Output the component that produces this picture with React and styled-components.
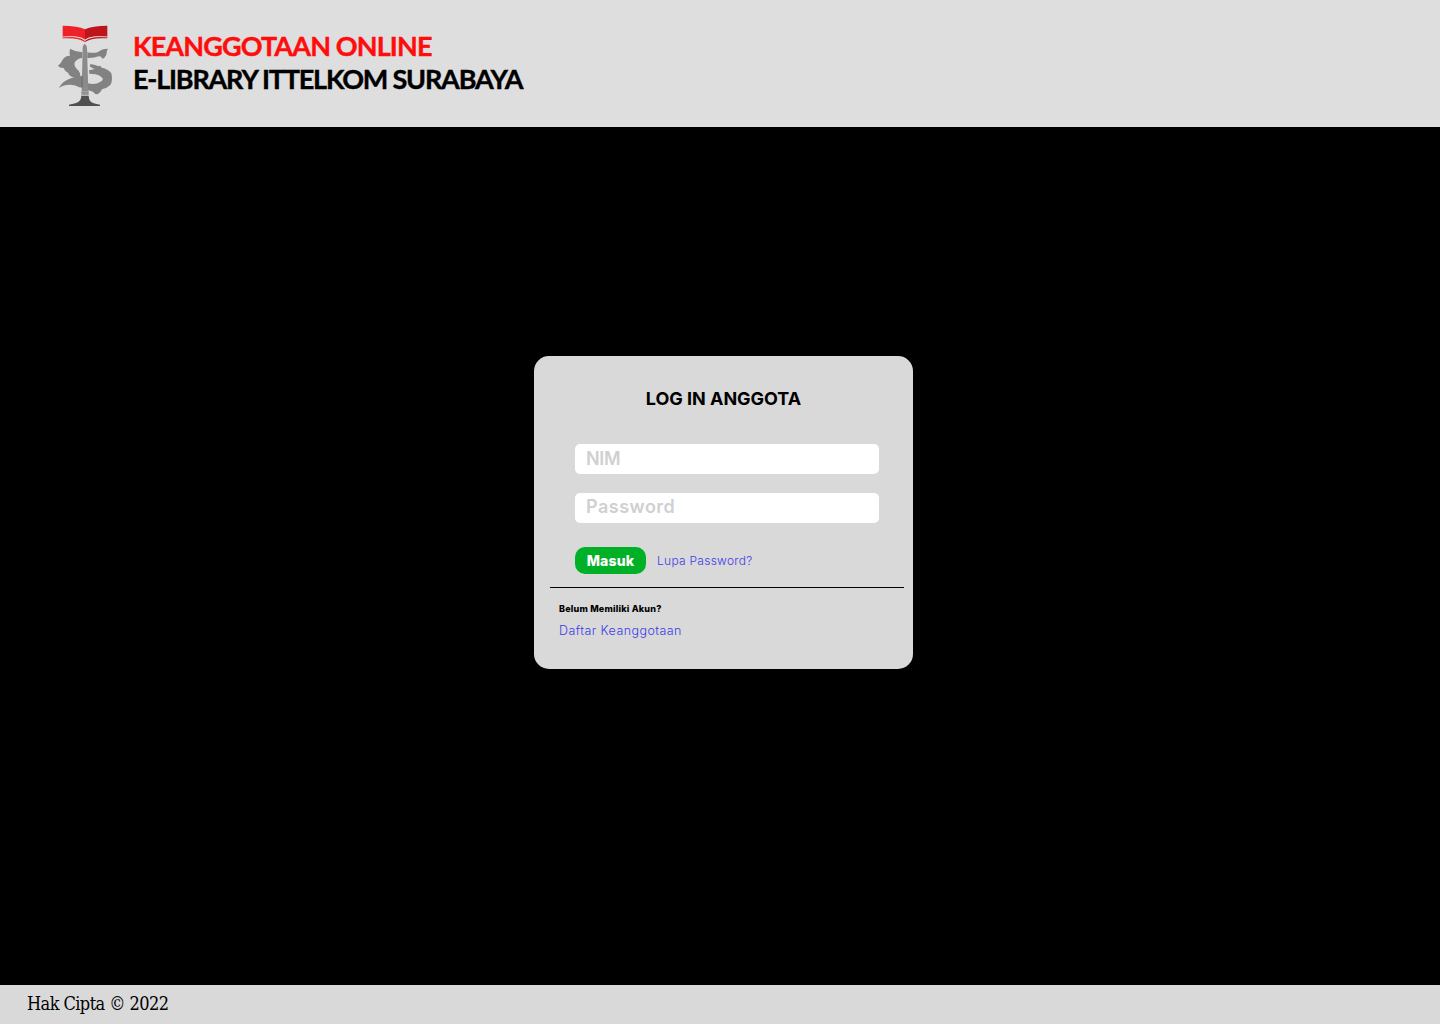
import React from "react";
import styled, { createGlobalStyle } from "styled-components";

const GlobalStyle = createGlobalStyle`
  *, *::before, *::after { box-sizing: border-box; }
  body { margin: 0; background: #000; }
`;

const sans = `Inter, "Liberation Sans", sans-serif`;

const Page = styled.div`
  display: flex;
  flex-direction: column;
  height: 1024px;
  background: #000;
  font-family: ${sans};
`;

const Header = styled.header`
  display: flex;
  flex: 0 0 127px;
  gap: 13px;
  padding: 18px 50px 0;
  background: #dedede;
`;

const Brand = styled.h1`
  display: flex;
  flex-direction: column;
  margin: 0;
  padding-top: 11px;
  font-family: Lato, "Open Sans", sans-serif;
  font-size: 27px;
  font-weight: 700;
  line-height: 33px;
  white-space: nowrap;
`;

const BrandLine = styled.span`
  color: ${(p) => p.$color};
  letter-spacing: ${(p) => p.$spacing};
  -webkit-text-stroke: 0.4px ${(p) => p.$color};
`;

const Main = styled.main`
  display: flex;
  flex: 1;
  align-items: flex-start;
  padding: 229px 0 0 534px;
`;

const Card = styled.form`
  display: flex;
  flex-direction: column;
  width: 379px;
  height: 313px;
  padding: 30px 9px 0 16px;
  border-radius: 15px;
  background: #d9d9d9;
`;

const CardTitle = styled.h2`
  margin: 0 0 33px;
  padding-right: 7px;
  font-size: 18px;
  font-weight: 700;
  line-height: 25px;
  letter-spacing: -0.03px;
  text-align: center;
`;

const Fields = styled.div`
  display: flex;
  flex-direction: column;
  gap: 18.5px;
  padding: 0 25px;
`;

const Field = styled.input`
  width: 304px;
  height: 30px;
  padding: 0 11px 2px;
  border: 0;
  border-radius: 5px;
  background: #fff;
  font: 600 18px ${sans};
  letter-spacing: ${(p) => p.$spacing};
  &::placeholder { color: #d0d0d0; opacity: 1; }
`;

const Actions = styled.div`
  display: flex;
  align-items: center;
  gap: 11px;
  margin: 24px 0 13.5px;
  padding: 0 25px;
`;

const Submit = styled.button`
  width: 71px;
  height: 27px;
  padding: 1px 0 0;
  border: 0;
  border-radius: 10px;
  background: #00b127;
  color: #fff;
  font: 800 14px ${sans};
  letter-spacing: 0.2px;
`;

const TextLink = styled.a`
  padding-top: ${(p) => p.$drop || "0"};
  color: #3c3ce8;
  font-size: ${(p) => p.$size};
  font-weight: 300;
  line-height: 18px;
  letter-spacing: ${(p) => p.$spacing};
  text-decoration: none;
`;

const Register = styled.section`
  display: flex;
  flex-direction: column;
  align-items: flex-start;
  gap: 5px;
  padding: 13px 9px 0;
  border-top: 1px solid #000;
`;

const Question = styled.strong`
  font-size: 9px;
  font-weight: 800;
  line-height: 16px;
  letter-spacing: 0.2px;
`;

const Footer = styled.footer`
  display: flex;
  flex: 0 0 39px;
  padding: 6px 27px 0;
  background: #d9d9d9;
  font-family: "DejaVu Serif Condensed", "DejaVu Serif", serif;
  font-size: 18px;
  font-stretch: condensed;
  line-height: 25px;
  letter-spacing: -0.57px;
`;

const Logo = () => (
  <svg width="70" height="94" viewBox="0 0 210 282" aria-label="Logo ITTelkom Surabaya">
    <path fill="#828282" d="M60 92 Q57 106 60 113 Q45 113 38 125 Q32 138 24 143 Q30 151 41 150 Q44 160 55 165 Q57 174 69 178 L91 179 Q93 163 80 152 Q70 142 75 131 Q83 121 97 119 L97 103 Q75 101 60 92Z" />
    <path fill="#828282" d="M112 103 Q130 106 143 103 Q153 93 174 92 Q169 99 169 110 Q164 121 157 122 Q154 114 146 115 Q132 121 112 120Z" />
    <path fill="#828282" d="M134 153 L121 147 Q117 142 122 138 Q137 141 146 145 Q151 140 155 149 Q174 152 184 166 Q189 188 181 201 Q171 211 157 213 Q153 221 144 228 Q135 231 131 223 Q125 218 112 216 L112 196 Q137 202 150 192 Q162 186 157 180 Q150 171 136 169 L118 167 L117 157Z" />
    <path fill="#828282" d="M97 174 Q79 174 63 181 Q40 187 26 211 Q40 199 61 200 Q77 201 88 208 L97 209Z" />
    <path fill="#8b8b8b" d="M95 220 L98 89 Q99 80 104 77 Q110 81 111 89 L115 220Z" />
    <path fill="#757575" d="M94 175h5v33h-5z" />
    <path fill="#888" d="M94 219h22v14H94z" />
    <path stroke="#c9c9c9" strokeWidth="1.5" d="M94 221h22M93 228h23M92 233h25" />
    <path fill="#505050" d="M94 234h22Q117 252 131 256L150 260V264H57V260L76 256Q93 251 94 234Z" />
    <path fill="#ee2128" d="M38 23Q83 23 105 34V65Q87 52 38 56Z" />
    <path fill="#bd151b" d="M172 23Q127 23 105 34V65Q123 52 172 56Z" />
    <path fill="#ed2028" d="M38 57Q88 53 105 68V72Q86 58 38 61Z" />
    <path fill="#b8171d" d="M172 57Q122 53 105 68V72Q124 58 172 61Z" />
    <path fill="none" stroke="#eee" strokeWidth="1.8" d="M38 57Q87 52 105 67Q123 52 172 57" />
  </svg>
);

export default function App() {
  return (
    <Page>
      <GlobalStyle />
      <Header>
        <Logo />
        <Brand>
          <BrandLine $color="#ff0d0d" $spacing="-0.86px">KEANGGOTAAN ONLINE</BrandLine>
          <BrandLine $color="#000" $spacing="-1.2px">E-LIBRARY ITTELKOM SURABAYA</BrandLine>
        </Brand>
      </Header>
      <Main>
        <Card onSubmit={(e) => e.preventDefault()}>
          <CardTitle>LOG IN ANGGOTA</CardTitle>
          <Fields>
            <Field placeholder="NIM" aria-label="NIM" $spacing="-0.3px" />
            <Field type="password" placeholder="Password" aria-label="Password" $spacing="0.5px" />
          </Fields>
          <Actions>
            <Submit>Masuk</Submit>
            <TextLink href="#" $size="12px" $spacing="0.27px" $drop="2px">Lupa Password?</TextLink>
          </Actions>
          <Register>
            <Question>Belum Memiliki Akun?</Question>
            <TextLink href="#" $size="12.5px" $spacing="0.43px">Daftar Keanggotaan</TextLink>
          </Register>
        </Card>
      </Main>
      <Footer>Hak Cipta © 2022</Footer>
    </Page>
  );
}
